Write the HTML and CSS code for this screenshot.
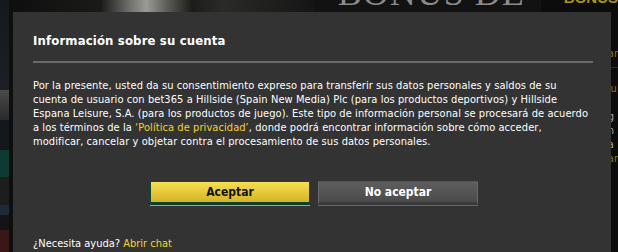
FILE: index.html
```html
<!DOCTYPE html>
<html lang="es">
<head>
<meta charset="utf-8">
<title>Información sobre su cuenta</title>
<link rel="stylesheet" href="styles.css">
</head>
<body>
<div class="page">
  <div class="bg-left">
    <div class="bg-strip s0"></div>
    <div class="bg-strip s1"></div>
    <div class="bg-strip s1b"></div>
    <div class="bg-strip s2"></div>
    <div class="bg-strip s3"></div>
    <div class="bg-strip s4"></div>
    <div class="bg-strip s4b"></div>
    <div class="bg-strip s5"></div>
  </div>
  <div class="bg-mid">
    <div class="bg-photo"></div>
    <div class="bg-bonus"><span>BONUS DE</span></div>
    <div class="bg-right">
      <div class="bg-yellow">BONUS</div>
      <div class="bg-lines">
        <span class="y">ar</span>
        <span class="sep"></span>
        <span class="y">iu</span>
        <span>l g</span>
        <span>n</span>
        <span>a</span>
        <span class="y">ar</span>
      </div>
    </div>
  </div>
</div>
<div class="overlay">
  <div class="modal">
    <h1 class="modal-title">Información sobre su cuenta</h1>
    <div class="modal-rule"></div>
    <p class="modal-text">Por la presente, usted da su consentimiento expreso para transferir sus datos personales y saldos de su<br>cuenta de usuario con bet365 a Hillside (Spain New Media) Plc (para los productos deportivos) y Hillside<br>Espana Leisure, S.A. (para los productos de juego). Este tipo de información personal se procesará de acuerdo<br>a los términos de la <a class="link" href="#">‘Política de privacidad’</a>, donde podrá encontrar información sobre cómo acceder,<br>modificar, cancelar y objetar contra el procesamiento de sus datos personales.</p>
    <div class="modal-actions">
      <button class="btn btn-accept">Aceptar</button>
      <button class="btn btn-decline">No aceptar</button>
    </div>
    <p class="modal-help">¿Necesita ayuda? <a class="link" href="#">Abrir chat</a></p>
  </div>
</div>
</body>
</html>
```
FILE: styles.css
```css
html, body {
  margin: 0;
  padding: 0;
  width: 618px;
  height: 252px;
  overflow: hidden;
  background: #0a0a0a;
  font-family: Tahoma, "DejaVu Sans Condensed", "DejaVu Sans", sans-serif;
}
.page {
  display: flex;
  height: 252px;
}
.bg-left {
  width: 13px;
  display: flex;
  flex-direction: column;
}
.bg-strip { flex: none; }
.s0 { height: 90px; background: linear-gradient(#15181c, #1c2026); }
.s1 { height: 30px; background: linear-gradient(#4a4a4a, #2a2a2a); }
.s1b { height: 30px; background: #15181a; }
.s2 { height: 27px; background: #0d3a33; }
.s3 { height: 28px; background: #1d1d1d; }
.s4 { height: 10px; background: #1c2a38; }
.s4b { height: 15px; background: #141414; }
.s5 { height: 22px; background: #3a1616; }
.bg-mid {
  flex: 1;
  display: flex;
}
.bg-photo {
  width: 305px;
  background: linear-gradient(90deg, #0e0e0e 0%, #1a1a18 30%, #6a6a66 39%, #9a9a96 45%, #5a5a56 52%, #1c1c1a 60%, #2a2a28 70%, #151515 100%);
}
.bg-bonus {
  width: 227px;
  background: #121212;
  overflow: hidden;
}
.bg-bonus span {
  display: block;
  margin-top: -27px;
  margin-left: 24px;
  font-family: "Liberation Serif", serif;
  font-size: 36px;
  line-height: 40px;
  color: #8a8a8a;
  letter-spacing: 1px;
  white-space: nowrap;
}
.bg-right {
  flex: 1;
  background: #0c0c0c;
  overflow: hidden;
}
.bg-yellow {
  margin-top: -11px;
  margin-left: 23px;
  font-family: "Liberation Sans", sans-serif;
  font-weight: bold;
  font-size: 15px;
  line-height: 18px;
  color: #a8921c;
}
.bg-lines {
  display: flex;
  flex-direction: column;
  margin-top: 40px;
  margin-left: 67px;
  font-size: 11px;
  line-height: 14px;
  color: #aaa;
}
.bg-lines .y { color: #8a7a18; }
.bg-lines .sep { height: 1px; background: #2a2a2a; margin: 6px 0 14px; }

.overlay {
  position: absolute;
  left: 13px;
  top: 12px;
}
.modal {
  width: 598px;
  height: 260px;
  background: #333333;
  box-sizing: border-box;
  padding: 22px 18px 0 20px;
  color: #ffffff;
}
.modal-title {
  margin: 0;
  font-size: 13px;
  font-weight: bold;
  line-height: 14px;
  letter-spacing: 0.15px;
  color: #ffffff;
}
.modal-rule {
  margin-top: 13px;
  height: 2px;
  width: 560px;
  background: #6a6a6a;
}
.modal-text {
  margin: 16px 0 0 0;
  width: 570px;
  font-size: 11px;
  line-height: 14px;
  letter-spacing: 0.07px;
  white-space: nowrap;
  color: #ffffff;
}
.link {
  color: #f3d42c;
  text-decoration: none;
}
.modal-actions {
  display: flex;
  gap: 8px;
  margin-top: 32px;
  margin-left: 117px;
}
.btn {
  width: 160px;
  height: 24px;
  box-sizing: border-box;
  padding: 0;
  font-family: inherit;
  font-size: 12px;
  font-weight: bold;
  cursor: pointer;
}
.btn-accept {
  color: #111;
  background: linear-gradient(#f6df52, #d4b425);
  border: 1px solid #0d4a3a;
  border-bottom: 3px solid #0d3f2a;
  box-shadow: 0 1px 0 #c9a820;
}
.btn-decline {
  color: #fff;
  background: linear-gradient(#5e5e5e, #4a4a4a);
  border: 1px solid #6a6a6a;
  border-top-color: #555;
  border-bottom: 3px solid #3a3a3a;
  box-shadow: 0 1px 0 #666;
}
.modal-help {
  margin: 32px 0 0 0;
  font-size: 11px;
  line-height: 14px;
  color: #ffffff;
}
```
